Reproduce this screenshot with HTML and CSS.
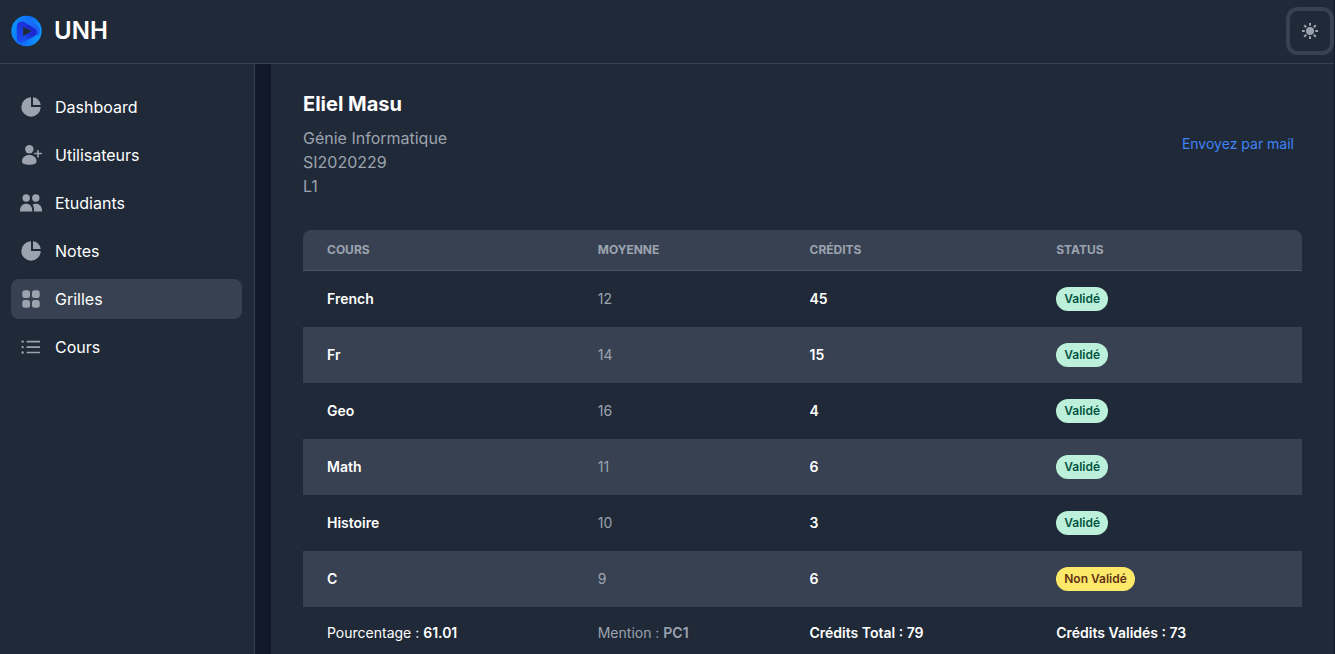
FILE: index.html
```html
<!DOCTYPE html>
<html lang="fr">
<head>
<meta charset="utf-8">
<meta name="viewport" content="width=device-width, initial-scale=1">
<title>UNH</title>
<link rel="stylesheet" href="styles.css">
</head>
<body>
<header class="topbar">
  <a class="brand" href="#">
    <svg class="brand-logo" viewBox="0 0 32 32" aria-hidden="true">
      <defs>
        <linearGradient id="ring" x1="0" y1="0.3" x2="1" y2="0.6"><stop offset="0" stop-color="#0796ff"/><stop offset="0.5" stop-color="#126cfa"/><stop offset="1" stop-color="#0a9bff"/></linearGradient>
        <linearGradient id="left" x1="0" y1="0" x2="0" y2="1"><stop offset="0" stop-color="#1b2fd6"/><stop offset="1" stop-color="#1c4cee"/></linearGradient>
        <linearGradient id="top" x1="0" y1="0" x2="1" y2="0.8"><stop offset="0" stop-color="#1180fe"/><stop offset="1" stop-color="#1a5cf4"/></linearGradient>
        <linearGradient id="low" x1="1" y1="0" x2="0" y2="0.8"><stop offset="0" stop-color="#1c20c6"/><stop offset="0.5" stop-color="#1b2bd2"/><stop offset="1" stop-color="#1468f8"/></linearGradient>
      </defs>
      <circle cx="16" cy="16" r="15.700" fill="url(#ring)"/>
      <path d="M6.500 12V8c1-5 7-6.500 11-4l8.500 5c4 2.500 5 8 2 12L12.500 11z" fill="url(#top)"/>
      <path d="M12 6l12.500 7.300c2.500 1.700 3 4.700 1 7L14 27c-3 1.500-6 0-7-2l5.500-3.700L21.300 16l-8.800-5z" fill="url(#low)"/>
      <path d="M6 12c0-5 4-7 8-4.500l4 2.500c-3-.5-5 .5-5.500 3v12c0 2.500-1.300 3.500-3 3-2.300-.5-3.500-2-3.500-4.500z" fill="url(#left)"/>
      <path d="M12.500 11.500v9.800l8.800-5.200z" fill="#1f2937"/>
    </svg>
    <span>UNH</span>
  </a>
  <button class="theme-toggle" type="button" aria-label="Thème">
    <svg viewBox="0 0 16 16" aria-hidden="true">
      <circle cx="8" cy="8" r="4" fill="currentColor"/>
      <path d="M8 0v2.700M8 13.300V16M0 8h2.700M13.300 8H16M2.200 2.200l2 2M11.800 11.800l2 2M2.200 13.800l2-2M11.800 4.200l2-2" stroke="currentColor" stroke-width="2"/>
    </svg>
  </button>
</header>
<div class="layout">
  <nav class="sidebar">
    <a class="nav-link" href="#">
      <svg viewBox="0 0 24 24" aria-hidden="true"><path d="M12 2.300A9.700 9.700 0 1 0 21.700 12H12z"/><path d="M14 2.300A9.200 9.200 0 0 1 21.700 10H14z"/></svg>
      <span>Dashboard</span>
    </a>
    <a class="nav-link" href="#">
      <svg viewBox="0 0 24 24" aria-hidden="true"><circle cx="10.300" cy="6.200" r="4.200"/><path d="M3 18.500c0-4 3-6.500 7.300-6.500s7.200 2.500 7.200 6.500c0 2.300-2.500 3.300-7.200 3.300S3 20.800 3 18.500z"/><path d="M18.200 7h1.600v2.700h3.200v1.600h-3.200v3.200h-1.600v-3.200h-3v-1.600h3z"/></svg>
      <span>Utilisateurs</span>
    </a>
    <a class="nav-link" href="#">
      <svg viewBox="0 0 24 24" aria-hidden="true"><circle cx="7.200" cy="7" r="3.700"/><circle cx="16.800" cy="7" r="3.700"/><path d="M1 20.600v-1.300c0-3.800 2.700-6.500 6.200-6.500s6 2.700 6 6.500v1.300z"/><path d="M13.600 13.500c1-.5 2-.7 3.200-.7 3.500 0 6.200 2.700 6.200 6.500v1.300h-8v-1.300c0-2.400-.4-4.300-1.400-5.800z"/></svg>
      <span>Etudiants</span>
    </a>
    <a class="nav-link" href="#">
      <svg viewBox="0 0 24 24" aria-hidden="true"><path d="M12 2.300A9.700 9.700 0 1 0 21.700 12H12z"/><path d="M14 2.300A9.200 9.200 0 0 1 21.700 10H14z"/></svg>
      <span>Notes</span>
    </a>
    <a class="nav-link active" href="#" aria-current="page">
      <svg viewBox="0 0 24 24" aria-hidden="true"><rect x="3.300" y="3.200" width="7.700" height="7.700" rx="2.500"/><rect x="13" y="3.200" width="7.700" height="7.700" rx="2.500"/><rect x="3.300" y="13" width="7.700" height="7.700" rx="2.500"/><rect x="13" y="13" width="7.700" height="7.700" rx="2.500"/></svg>
      <span>Grilles</span>
    </a>
    <a class="nav-link" href="#">
      <svg viewBox="0 0 24 24" aria-hidden="true"><circle cx="3.600" cy="6.600" r="1.200"/><circle cx="3.600" cy="12.100" r="1.200"/><circle cx="3.600" cy="17.500" r="1.200"/><path d="M7.600 5.800h13.400v1.600H7.600zM7.600 11.300h13.400v1.600H7.600zM7.600 16.700h13.400v1.600H7.600z"/></svg>
      <span>Cours</span>
    </a>
  </nav>
  <main class="content">
    <section class="student">
      <div>
        <h1 class="student-name">Eliel Masu</h1>
        <p class="student-info">Génie Informatique</p>
        <p class="student-info">SI2020229</p>
        <p class="student-info">L1</p>
      </div>
      <a class="mail-link" href="#">Envoyez par mail</a>
    </section>
    <table class="grades">
      <colgroup><col class="col-course"><col class="col-average"><col class="col-credits"><col></colgroup>
      <thead>
        <tr><th scope="col">Cours</th><th scope="col">Moyenne</th><th scope="col">Crédits</th><th scope="col">Status</th></tr>
      </thead>
      <tbody>
        <tr><td class="strong">French</td><td>12</td><td class="strong">45</td><td><span class="badge">Validé</span></td></tr>
        <tr><td class="strong">Fr</td><td>14</td><td class="strong">15</td><td><span class="badge">Validé</span></td></tr>
        <tr><td class="strong">Geo</td><td>16</td><td class="strong">4</td><td><span class="badge">Validé</span></td></tr>
        <tr><td class="strong">Math</td><td>11</td><td class="strong">6</td><td><span class="badge">Validé</span></td></tr>
        <tr><td class="strong">Histoire</td><td>10</td><td class="strong">3</td><td><span class="badge">Validé</span></td></tr>
        <tr><td class="strong">C</td><td>9</td><td class="strong">6</td><td><span class="badge warning">Non Validé</span></td></tr>
      </tbody>
      <tfoot>
        <tr><td class="light">Pourcentage : <b>61.01</b></td><td>Mention : <b>PC1</b></td><td class="strong">Crédits Total : 79</td><td class="strong">Crédits Validés : 73</td></tr>
      </tfoot>
    </table>
  </main>
</div>
</body>
</html>
```

FILE: styles.css
```css
* {
  box-sizing: border-box;
}

body {
  margin: 0;
  height: 100vh;
  overflow: hidden;
  display: flex;
  flex-direction: column;
  padding-right: 1px;
  background: #111827;
  color: #fff;
  font-family: Inter, "Liberation Sans", sans-serif;
  font-size: 16px;
  line-height: 24px;
}

a {
  color: inherit;
  text-decoration: none;
}

.topbar {
  flex: none;
  display: flex;
  align-items: center;
  justify-content: space-between;
  height: 64px;
  padding: 0 4px 1px 11px;
  background: #1f2937;
  border-bottom: 1px solid #374151;
}

.brand {
  display: flex;
  align-items: center;
  gap: 12px;
  font-size: 24px;
  line-height: 32px;
  font-weight: 600;
}

.brand-logo {
  width: 31px;
  height: 32px;
}

.theme-toggle {
  display: flex;
  align-items: center;
  justify-content: center;
  width: 40px;
  height: 40px;
  padding: 0;
  border: 0;
  border-radius: 8px;
  background: transparent;
  box-shadow: 0 0 0 4px #374151;
  color: #9ca3af;
}

.theme-toggle svg {
  width: 16px;
  height: 16px;
}

.layout {
  flex: 1;
  min-height: 0;
  display: flex;
  gap: 16px;
}

.sidebar {
  flex: none;
  width: 255px;
  display: flex;
  flex-direction: column;
  gap: 8px;
  padding: 23px 12px 0 11px;
  background: #1f2937;
  border-right: 1px solid #374151;
}

.nav-link {
  display: flex;
  align-items: center;
  gap: 12px;
  padding: 8px;
  border-radius: 8px;
}

.nav-link.active {
  background: #374151;
}

.nav-link svg {
  width: 24px;
  height: 24px;
  fill: #9ca3af;
}

.content {
  flex: 1;
  padding: 26px 32px;
  background: #1f2937;
}

.student {
  display: flex;
  align-items: center;
  justify-content: space-between;
  padding-right: 8px;
  margin-bottom: 32px;
}

.student-name {
  margin: 0 0 8px;
  font-size: 20px;
  line-height: 28px;
  font-weight: 700;
}

.student-info {
  margin: 0;
  color: #9ca3af;
}

.mail-link {
  color: #3f83f8;
  font-size: 14px;
  line-height: 20px;
}

.grades {
  width: 100%;
  table-layout: fixed;
  border-collapse: separate;
  border-spacing: 0;
  font-size: 14px;
  line-height: 20px;
  color: #9ca3af;
}

.col-course {
  width: 27.1%;
}

.col-average {
  width: 21.2%;
}

.col-credits {
  width: 24.7%;
}

.grades th {
  padding: 12px 24px;
  background: #374151;
  border-bottom: 1px solid #4b5563;
  font-size: 12px;
  line-height: 16px;
  font-weight: 700;
  text-align: left;
  text-transform: uppercase;
}

.grades th:first-child {
  border-top-left-radius: 8px;
}

.grades th:last-child {
  border-top-right-radius: 8px;
}

.grades td {
  padding: 0 24px;
}

.grades tbody tr {
  height: 56px;
}

.grades tbody tr:nth-child(even) {
  background: #374151;
}

.grades tfoot tr {
  height: 52px;
}

.grades .strong {
  color: #fff;
  font-weight: 600;
}

.grades .light {
  color: #fff;
}

.grades b {
  font-weight: 600;
}

.badge {
  display: inline-block;
  padding: 4px 8px;
  border-radius: 12px;
  background: #bcf0da;
  color: #03543f;
  font-size: 12px;
  line-height: 16px;
  font-weight: 600;
  vertical-align: middle;
}

.badge.warning {
  background: #fce96a;
  color: #633112;
}
```
